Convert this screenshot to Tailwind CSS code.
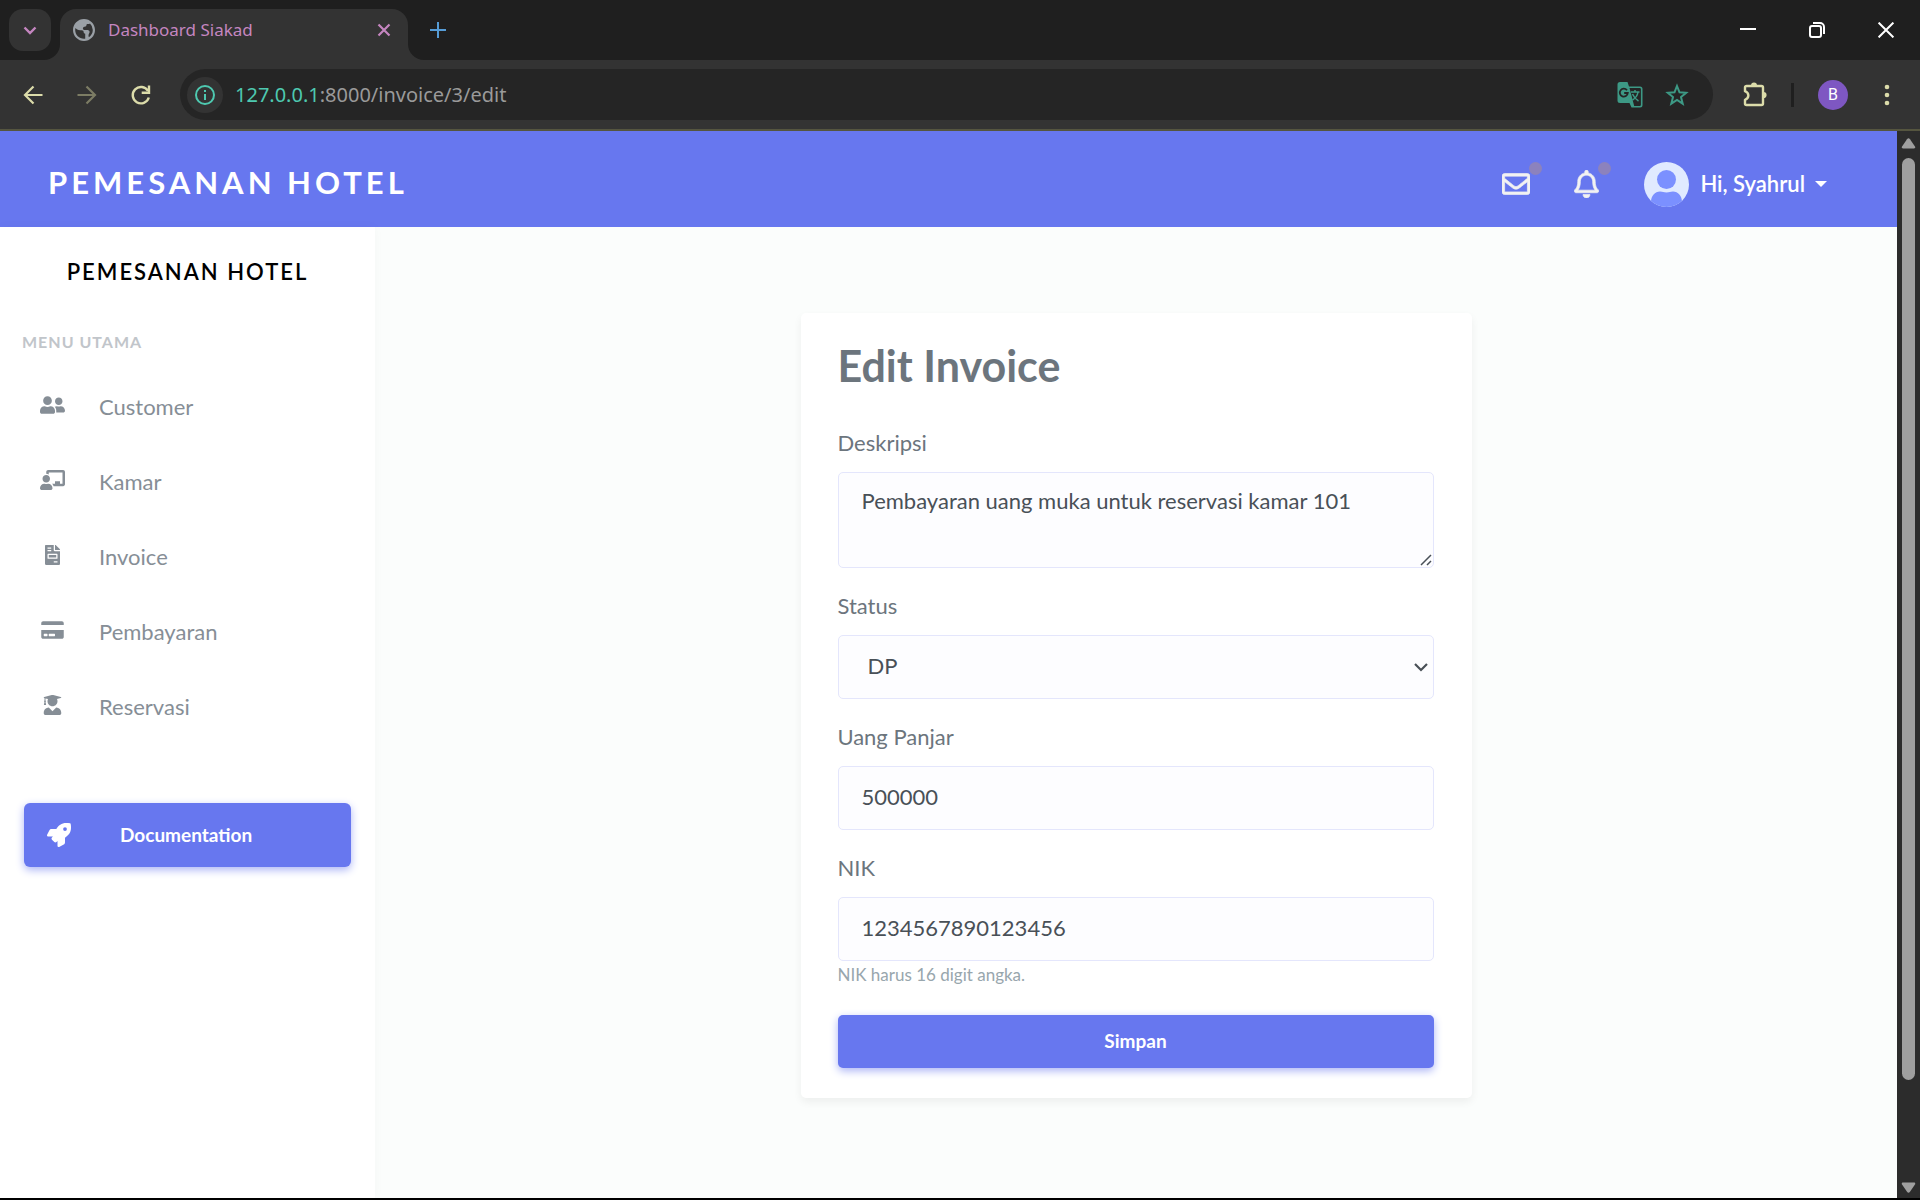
<!DOCTYPE html>
<html lang="id">
<head>
<meta charset="utf-8">
<meta name="viewport" content="width=device-width, initial-scale=1">
<title>Dashboard Siakad</title>
<script src="https://cdn.jsdelivr.net/npm/@tailwindcss/browser@4"></script>
</head>
<body class="flex min-h-screen flex-col border-b-2 border-black bg-[#fbfdfc] font-['Lato',sans-serif]">

<!-- Browser window: tab strip -->
<div class="flex h-[60px] items-center bg-[#1f1f1f] pl-[9px] font-['Noto_Sans',sans-serif]">
  <button type="button" aria-label="Cari tab" class="flex size-[42px] items-center justify-center rounded-[14px] bg-[#333333]">
    <svg class="size-4" viewBox="0 0 16 16" fill="none" stroke="#c586c0" stroke-width="2.4"><path d="M2.5 5.5 8 11l5.500-5.500"/></svg>
  </button>
  <div class="relative ml-[9px] flex h-[51px] w-[348px] items-center self-end rounded-t-[16px] bg-[#333333] pr-[14px] pb-[9px] pl-[13px]">
    <svg class="absolute bottom-0 -left-4 size-4" viewBox="0 0 16 16"><path d="M16 0v16H0A16 16 0 0 0 16 0z" fill="#333333"/></svg>
    <svg class="absolute -right-4 bottom-0 size-4" viewBox="0 0 16 16"><path d="M0 0v16h16A16 16 0 0 1 0 0z" fill="#333333"/></svg>
    <svg class="size-[22px]" viewBox="2 2 20 20"><path fill="#9aa0a6" d="M12 2C6.480 2 2 6.480 2 12s4.480 10 10 10 10-4.480 10-10S17.520 2 12 2zm-8 10c0-.6.07-1.200.2-1.750.8 1.100 2.300 2.050 4.200 2.050h1.400c1.400 0 1.900.8 1.900 1.700 0 .8.6 1.300 1.400 1.300v4.600c-.4.060-.7.1-1.100.1-4.400 0-8-3.600-8-8zm12.500 6.600c-.3-.5-.4-1-.4-1.600 0-1.500 1-2.200 1-3.200 0-1.300-1.100-1.700-2.600-1.700h-1.900c-1 0-1.600-.7-1.600-1.600 0-1 .8-1.500 1.700-1.500.9 0 1.500-.5 1.500-1.300 0-.7.5-1.100 1.100-1.100h.7c.6 0 1.100-.2 1.400-.6A8 8 0 0 1 20 12c0 2.700-1.400 5.100-3.500 6.600z"/></svg>
    <span class="ml-[13px] flex-1 text-[17px] leading-6 text-[#c586c0]">Dashboard Siakad</span>
    <button type="button" aria-label="Tutup tab" class="p-[2px]"><svg class="size-4" viewBox="0 0 16 16" stroke="#c586c0" stroke-width="2.200"><path d="m2.500 2.500 11 11m0-11-11 11"/></svg></button>
  </div>
  <button type="button" aria-label="Tab baru" class="ml-[22px]"><svg class="size-4" viewBox="0 0 16 16" stroke="#569cd6" stroke-width="2"><path d="M8 0v16M0 8h16"/></svg></button>
  <div class="ml-auto flex items-center gap-[53px] pr-[26px]">
    <button type="button" aria-label="Kecilkan"><svg class="size-4" viewBox="0 0 16 16" stroke="#fff" stroke-width="2"><path d="M0 7h16"/></svg></button>
    <button type="button" aria-label="Pulihkan"><svg class="size-4" viewBox="0 0 16 16" fill="none" stroke="#fff" stroke-width="2"><rect x="1" y="4" width="11" height="11" rx="2"/><path d="M4 1h7a4 4 0 0 1 4 4v7"/></svg></button>
    <button type="button" aria-label="Tutup"><svg class="size-4" viewBox="0 0 16 16" stroke="#fff" stroke-width="2"><path d="m.6.6 14.800 14.800m0-14.800L.6 15.400"/></svg></button>
  </div>
</div>

<!-- Browser window: toolbar -->
<div class="flex h-[71px] items-center border-b-2 border-[#55553f] bg-[#333333] pl-[22px] font-['Noto_Sans',sans-serif]">
  <button type="button" aria-label="Kembali"><svg class="size-[22px]" viewBox="0 0 22 22" fill="none" stroke="#dcdcaa" stroke-width="2.200"><path d="M20.500 11H3M11.500 2.500 3 11l8.500 8.500"/></svg></button>
  <button type="button" aria-label="Maju" class="ml-8"><svg class="size-[22px]" viewBox="0 0 22 22" fill="none" stroke="#7c7c64" stroke-width="2.200"><path d="M1.500 11H19M10.500 2.500 19 11l-8.500 8.500"/></svg></button>
  <button type="button" aria-label="Muat ulang" class="ml-8"><svg class="size-[22px]" viewBox="0 0 22 22" fill="none" stroke="#dcdcaa" stroke-width="2.400"><path d="M18.800 13.500A8.200 8.200 0 1 1 18 7"/><path d="M19 1.500v7.300h-7.300"/></svg></button>
  <div class="ml-7 flex h-[51px] flex-1 items-center rounded-full bg-[#252525] pr-[24px] pl-[7px]">
    <button type="button" aria-label="Info situs" class="flex size-9 items-center justify-center rounded-full bg-[#333333]">
      <svg class="size-5" viewBox="0 0 20 20" fill="none" stroke="#4ec9b0" stroke-width="2"><circle cx="10" cy="10" r="9"/><path d="M10 9v6M10 5v2"/></svg>
    </button>
    <p class="ml-3 flex-1 text-[20px] leading-7 text-[#9a9a9a]"><span class="text-[#4ec9b0]">127.0.0.1</span>:8000/invoice/3/edit</p>
    <button type="button" aria-label="Terjemahkan">
      <svg class="size-[26px]" viewBox="0 0 26 26"><path fill="#3d9985" d="M3 0h7.500l1.500 4.500h11a2.500 2.500 0 0 1 2.500 2.500v16a2.500 2.500 0 0 1-2.500 2.500H14.500L12.500 21H3a2.500 2.500 0 0 1-2.500-2.500v-16A2.500 2.500 0 0 1 3 0z"/><path fill="#252525" d="m12.500 6 4.700 18h5.500a1.200 1.200 0 0 0 1.200-1.200V7.200A1.200 1.200 0 0 0 22.700 6z"/><path d="M10 8.200A4 4 0 1 0 10.800 11H7.200" fill="none" stroke="#252525" stroke-width="1.800"/><path d="M14 10h8.500M18 8v2m3 0c-.5 3.500-3 6.500-5.500 8M15.500 12c1 2.500 3.500 5.500 6 7" fill="none" stroke="#3d9985" stroke-width="1.500"/></svg>
    </button>
    <button type="button" aria-label="Markahi" class="ml-[22px]">
      <svg class="size-6" viewBox="0 0 24 24" fill="none" stroke="#3d9985" stroke-width="2"><path d="m12 3 2.500 6.300 6.700.5-5.200 4.300 1.700 6.600L12 17l-5.700 3.700L8 14.100 2.800 9.800l6.700-.5z"/></svg>
    </button>
  </div>
  <button type="button" aria-label="Ekstensi" class="ml-7">
    <svg class="size-7" viewBox="0 0 28 28"><path d="M4 6.500a1.500 1.500 0 0 1 1.500-1.500h15A1.500 1.500 0 0 1 22 6.500v16a1.500 1.500 0 0 1-1.500 1.500h-15A1.500 1.500 0 0 1 4 22.500v-3.700c4.500-1.800 4.500-6.800 0-8.600z" fill="none" stroke="#dcdcaa" stroke-width="2.400" stroke-linejoin="round"/><path d="M10 4.500a3 3 0 0 1 6 0zM22.500 11a3.100 3.100 0 0 1 0 6.200z" fill="#dcdcaa"/></svg>
  </button>
  <span class="ml-[22px] h-6 w-[3px] bg-[#1f1f1f]"></span>
  <button type="button" aria-label="Profil" class="ml-6 flex size-[30px] items-center justify-center rounded-full bg-[#7e57c2] font-['Roboto',sans-serif] text-[16px] text-white">B</button>
  <button type="button" aria-label="Menu" class="mr-[22px] ml-7"><svg class="h-6 w-[22px]" viewBox="0 0 22 24" fill="#dcdcaa"><circle cx="11" cy="4" r="2.300"/><circle cx="11" cy="12" r="2.300"/><circle cx="11" cy="20" r="2.300"/></svg></button>
</div>

<!-- Page viewport -->
<div class="flex flex-1">
  <div class="flex flex-1 flex-col">
    <header class="flex h-24 items-center bg-[#6777ef] pr-[70px] pl-12 text-white">
      <a href="#" class="pt-[6px] text-[31px] leading-9 font-bold tracking-[4px]">PEMESANAN HOTEL</a>
      <nav class="ml-auto flex items-center pt-[10px]">
        <a href="#" aria-label="Pesan" class="relative">
          <svg class="size-7" viewBox="0 0 512 512" fill="#f2f2f2" stroke="#f2f2f2" stroke-width="12"><path d="M464 64H48C21.490 64 0 85.490 0 112v288c0 26.510 21.490 48 48 48h416c26.510 0 48-21.490 48-48V112c0-26.510-21.490-48-48-48zm0 48v40.805c-22.422 18.259-58.168 46.651-134.587 106.490-16.841 13.247-50.201 45.072-73.413 44.701-23.208.375-56.579-31.459-73.413-44.701C106.180 199.465 70.425 171.067 48 152.805V112h416zM48 400V214.398c22.914 18.251 55.409 43.862 104.938 82.646 21.857 17.205 60.134 55.186 103.062 54.955 42.717.231 80.509-37.199 103.053-54.947 49.528-38.783 82.032-64.401 104.947-82.653V400H48z"/></svg>
          <span class="absolute -top-2 -right-3 size-[13px] rounded-full bg-[#8c82bd]"></span>
        </a>
        <a href="#" aria-label="Notifikasi" class="relative ml-11">
          <svg class="h-7 w-[25px]" viewBox="0 0 448 512" fill="#f2f2f2" stroke="#f2f2f2" stroke-width="12"><path d="M439.390 362.290c-19.320-20.760-55.470-51.990-55.470-154.290 0-77.700-54.480-139.900-127.940-155.160V32c0-17.670-14.320-32-31.980-32s-31.980 14.330-31.980 32v20.840C118.560 68.100 64.080 130.300 64.080 208c0 102.300-36.150 133.530-55.470 154.290-6 6.450-8.660 14.160-8.610 21.710.11 16.400 12.980 32 32.100 32h383.800c19.120 0 32-15.600 32.100-32 .05-7.550-2.610-15.270-8.610-21.710zM67.530 368c21.220-27.970 44.420-74.330 44.530-159.420 0-.2-.06-.38-.06-.58 0-61.860 50.140-112 112-112s112 50.140 112 112c0 .2-.06.38-.06.58.11 85.100 23.310 131.460 44.530 159.420H67.530zM224 512c35.320 0 63.970-28.650 63.970-64H160.030c0 35.350 28.650 64 63.970 64z"/></svg>
          <span class="absolute -top-2 -right-3 size-[13px] rounded-full bg-[#8c82bd]"></span>
        </a>
        <button type="button" class="ml-[45px] flex items-center">
          <svg class="size-[45px]" viewBox="0 0 45 45"><defs><clipPath id="avatar"><circle cx="22.500" cy="22.500" r="22.500"/></clipPath></defs><g clip-path="url(#avatar)"><path fill="#e0eaff" d="M0 0h45v45H0z"/><circle cx="22.500" cy="17.500" r="9.500" fill="#7b90ff"/><path fill="#7b90ff" d="M7 45v-5c0-6 4-10.500 9-10.500 3 0 3.500 1 6.500 1s3.500-1 6.500-1c5 0 9 4.500 9 10.500v5z"/></g></svg>
          <span class="ml-[11px] text-[22px] leading-7 font-semibold">Hi, Syahrul</span>
          <svg class="ml-[10px] h-[6px] w-3" viewBox="0 0 12 6"><path d="M0 0h12L6 6z" fill="#fff"/></svg>
        </button>
      </nav>
    </header>

    <div class="flex flex-1">
      <aside class="w-[375px] bg-white shadow-[0_0_10px_rgba(0,0,0,0.03)]">
        <p class="pt-[29px] text-center text-[22px] leading-8 font-semibold tracking-[2px] text-black"><a href="#">PEMESANAN HOTEL</a></p>
        <p class="mt-[42px] pl-[22px] text-[16px] leading-6 font-bold tracking-[1px] text-[#c1c5ca]">MENU UTAMA</p>
        <ul class="mt-[15px] text-[22px] text-[#868e96]">
          <li><a href="#" class="flex h-[75px] items-center pl-10"><svg class="mb-[3px] h-5 w-[25px]" viewBox="0 0 640 512" fill="currentColor"><path d="M192 256c61.900 0 112-50.100 112-112S253.900 32 192 32 80 82.100 80 144s50.100 112 112 112zm76.800 32h-8.300c-20.800 10-43.900 16-68.500 16s-47.600-6-68.500-16h-8.300C51.600 288 0 339.600 0 403.200V432c0 26.500 21.500 48 48 48h288c26.500 0 48-21.500 48-48v-28.800c0-63.600-51.600-115.200-115.200-115.200zM480 256c53 0 96-43 96-96s-43-96-96-96-96 43-96 96 43 96 96 96zm48 32h-3.800c-13.900 4.800-28.600 8-44.200 8s-30.300-3.200-44.200-8H432c-20.400 0-39.200 5.900-55.700 15.400 24.400 26.300 39.700 61.200 39.700 99.800v38.400c0 2.200-.5 4.300-.6 6.400H592c26.500 0 48-21.500 48-48 0-61.900-50.100-112-112-112z"/></svg><span class="ml-[34px]">Customer</span></a></li>
          <li><a href="#" class="flex h-[75px] items-center pl-10"><svg class="mb-[3px] h-5 w-[25px]" viewBox="0 0 640 512" fill="currentColor"><path d="M208 352c-2.390 0-4.780.35-7.060 1.090C187.980 357.300 174.350 360 160 360c-14.350 0-27.980-2.700-40.950-6.910-2.280-.74-4.660-1.090-7.050-1.090C49.940 352-.33 402.480 0 464.620.14 490.880 21.730 512 48 512h224c26.270 0 47.860-21.120 48-47.380.33-62.140-49.940-112.620-112-112.620zm-48-32c53.020 0 96-42.980 96-96s-42.980-96-96-96-96 42.980-96 96 42.980 96 96 96zM592 0H208c-26.470 0-48 22.250-48 49.590V96c23.420 0 45.100 6.780 64 17.800V64h352v288h-64v-64H384v64h-76.240c19.100 16.690 33.120 38.730 39.690 64H592c26.470 0 48-22.250 48-49.590V49.590C640 22.250 618.470 0 592 0z"/></svg><span class="ml-[34px]">Kamar</span></a></li>
          <li><a href="#" class="flex h-[75px] items-center pl-10"><svg class="mb-[3px] h-5 w-[25px]" viewBox="0 0 384 512" fill="currentColor"><path d="M288 256H96v64h192v-64zm89-151L279.100 7c-4.500-4.500-10.600-7-17-7H256v128h128v-6.100c0-6.300-2.500-12.400-7-16.900zm-153 31V0H24C10.700 0 0 10.700 0 24v464c0 13.300 10.700 24 24 24h336c13.300 0 24-10.700 24-24V160H248c-13.200 0-24-10.800-24-24zM64 72c0-4.420 3.580-8 8-8h80c4.420 0 8 3.580 8 8v16c0 4.420-3.580 8-8 8H72c-4.420 0-8-3.580-8-8V72zm0 64c0-4.420 3.580-8 8-8h80c4.420 0 8 3.580 8 8v16c0 4.420-3.580 8-8 8H72c-4.420 0-8-3.580-8-8v-16zm256 304c0 4.420-3.580 8-8 8h-80c-4.420 0-8-3.580-8-8v-16c0-4.420 3.580-8 8-8h80c4.420 0 8 3.580 8 8v16zm0-200v96c0 8.840-7.160 16-16 16H80c-8.840 0-16-7.160-16-16v-96c0-8.840 7.160-16 16-16h224c8.840 0 16 7.160 16 16z"/></svg><span class="ml-[34px]">Invoice</span></a></li>
          <li><a href="#" class="flex h-[75px] items-center pl-10"><svg class="mb-[3px] h-5 w-[25px]" viewBox="0 0 576 512" fill="currentColor"><path d="M0 432c0 26.500 21.500 48 48 48h480c26.500 0 48-21.500 48-48V256H0v176zm192-68c0-6.600 5.400-12 12-12h136c6.600 0 12 5.400 12 12v40c0 6.600-5.400 12-12 12H204c-6.600 0-12-5.400-12-12v-40zm-128 0c0-6.600 5.400-12 12-12h72c6.600 0 12 5.400 12 12v40c0 6.600-5.400 12-12 12H76c-6.600 0-12-5.400-12-12v-40zM576 80v48H0V80c0-26.500 21.500-48 48-48h480c26.500 0 48 21.500 48 48z"/></svg><span class="ml-[34px]">Pembayaran</span></a></li>
          <li><a href="#" class="flex h-[75px] items-center pl-10"><svg class="mb-[3px] h-5 w-[25px]" viewBox="0 0 448 512" fill="currentColor"><path d="M319.400 320.600L224 416l-95.400-95.400C57.100 323.700 0 382.200 0 454.400v9.600c0 26.500 21.500 48 48 48h352c26.500 0 48-21.500 48-48v-9.600c0-72.200-57.100-130.700-128.600-133.800zM13.600 79.800l6.400 1.500v58.400c-7 4.200-12 11.500-12 20.300 0 8.400 4.600 15.400 11.100 19.700L3.500 242c-1.700 6.900 2.100 14 7.600 14h41.800c5.500 0 9.300-7.100 7.600-14l-15.600-62.300C51.400 175.400 56 168.400 56 160c0-8.800-5-16.100-12-20.300V87.100l66 15.900c-8.600 17.200-14 36.400-14 57 0 70.700 57.300 128 128 128s128-57.300 128-128c0-20.600-5.300-39.800-14-57l96.300-23.200c18.200-4.400 18.200-27.100 0-31.500l-190.400-46c-13-3.100-26.700-3.100-39.700 0L13.600 48.200c-18.100 4.400-18.100 27.200 0 31.600z"/></svg><span class="ml-[34px]">Reservasi</span></a></li>
        </ul>
        <a href="#" class="mx-6 mt-[59px] flex h-16 items-center rounded-[6px] bg-[#6777ef] pl-[23px] text-[19px] font-bold text-white shadow-[0_3px_8px_#acb5f6]">
          <svg class="size-6" viewBox="0 0 512 512" fill="currentColor"><path d="M505.120 19.094c-1.190-5.531-6.658-11-12.207-12.188C460.716 0 435.507 0 410.407 0 307.175 0 245.269 55.203 199.052 128H94.838c-16.348.016-35.557 11.875-42.887 26.484L2.516 253.297A28.400 28.400 0 0 0 0 264a24 24 0 0 0 24.006 24h103.810l-22.474 22.469c-11.365 11.361-12.996 32.258 0 45.250l50.904 50.906c11.156 11.187 32.156 13.156 45.277 0l22.475-22.469V488a24 24 0 0 0 24.006 24 28.560 28.560 0 0 0 10.707-2.516l98.728-49.390c14.629-7.297 26.508-26.500 26.508-42.860V312.797c72.598-46.313 128.035-108.406 128.035-211.094.093-25.203.093-50.406-6.862-82.609zM384.040 168a40 40 0 1 1 40.010-40 40.020 40.020 0 0 1-40.010 40z"/></svg>
          <span class="ml-[49px]">Documentation</span>
        </a>
      </aside>

      <main class="flex flex-1 items-start justify-center pt-[86px] pb-[100px]">
        <form class="flex w-full max-w-[671px] flex-col rounded-[5px] bg-white pt-7 pr-[38px] pb-[30px] pl-[37px] text-[22px] text-[#495057] shadow-[0_4px_8px_rgba(0,0,0,0.06)]">
          <h1 class="mb-9 text-[43px] leading-[50px] font-bold text-[#6c757d]">Edit Invoice</h1>

          <label for="deskripsi" class="mb-[13px] leading-8 text-[#6c757d]">Deskripsi</label>
          <div class="grid">
            <textarea id="deskripsi" class="col-start-1 row-start-1 h-24 resize-none rounded-[5px] border border-[#e4e6fc] bg-[#fdfdff] px-[23px] py-3 leading-8">Pembayaran uang muka untuk reservasi kamar 101</textarea>
            <svg class="pointer-events-none col-start-1 row-start-1 mr-[2px] mb-[2px] size-3 self-end justify-self-end" viewBox="0 0 12 12" stroke="#495057" stroke-width="1.500"><path d="M1 11 11 1M7 11l4-4"/></svg>
          </div>

          <label for="status" class="mt-[22px] mb-[13px] leading-8 text-[#6c757d]">Status</label>
          <div class="grid items-center">
            <select id="status" class="col-start-1 row-start-1 h-16 appearance-none rounded-[5px] border border-[#e4e6fc] bg-[#fdfdff] px-[29px] pb-1">
              <option>DP</option>
              <option>Lunas</option>
            </select>
            <svg class="pointer-events-none col-start-1 row-start-1 mr-[5px] h-4 w-4 justify-self-end" viewBox="0 0 16 16" fill="none" stroke="#495057" stroke-width="2.200"><path d="m2 5 6 6 6-6"/></svg>
          </div>

          <label for="panjar" class="mt-[22px] mb-[13px] leading-8 text-[#6c757d]">Uang Panjar</label>
          <input id="panjar" type="text" inputmode="numeric" value="500000" class="h-16 rounded-[5px] border border-[#e4e6fc] bg-[#fdfdff] px-[23px] pb-1">

          <label for="nik" class="mt-[22px] mb-[13px] leading-8 text-[#6c757d]">NIK</label>
          <input id="nik" type="text" inputmode="numeric" value="1234567890123456" aria-describedby="nik-help" class="h-16 rounded-[5px] border border-[#e4e6fc] bg-[#fdfdff] px-[23px] pb-1">
          <small id="nik-help" class="mt-[2px] text-[17px] leading-6 text-[#98a6ad]">NIK harus 16 digit angka.</small>

          <button type="submit" class="mt-7 h-[53px] rounded-[5px] bg-[#6777ef] text-[19px] font-bold text-white shadow-[0_3px_8px_#acb5f6]">Simpan</button>
        </form>
      </main>
    </div>
  </div>

  <!-- Browser scroll bar -->
  <div class="flex w-[23px] flex-col items-center bg-[#2c2c2c] pt-[7px] pb-[5px]">
    <svg class="h-[11px] w-[15px]" viewBox="0 0 15 11"><path d="M6 1.200a1.900 1.900 0 0 1 3 0l5 7.300c.6 1 .1 2-1 2H2c-1.100 0-1.600-1-1-2z" fill="#9f9f9f"/></svg>
    <div class="mt-[9px] mb-[102px] w-[13px] flex-1 rounded-full bg-[#9f9f9f]"></div>
    <svg class="h-[11px] w-[15px]" viewBox="0 0 15 11"><path d="M6 9.800a1.900 1.900 0 0 0 3 0l5-7.300c.6-1 .1-2-1-2H2c-1.100 0-1.600 1-1 2z" fill="#9f9f9f"/></svg>
  </div>
</div>
</body>
</html>
